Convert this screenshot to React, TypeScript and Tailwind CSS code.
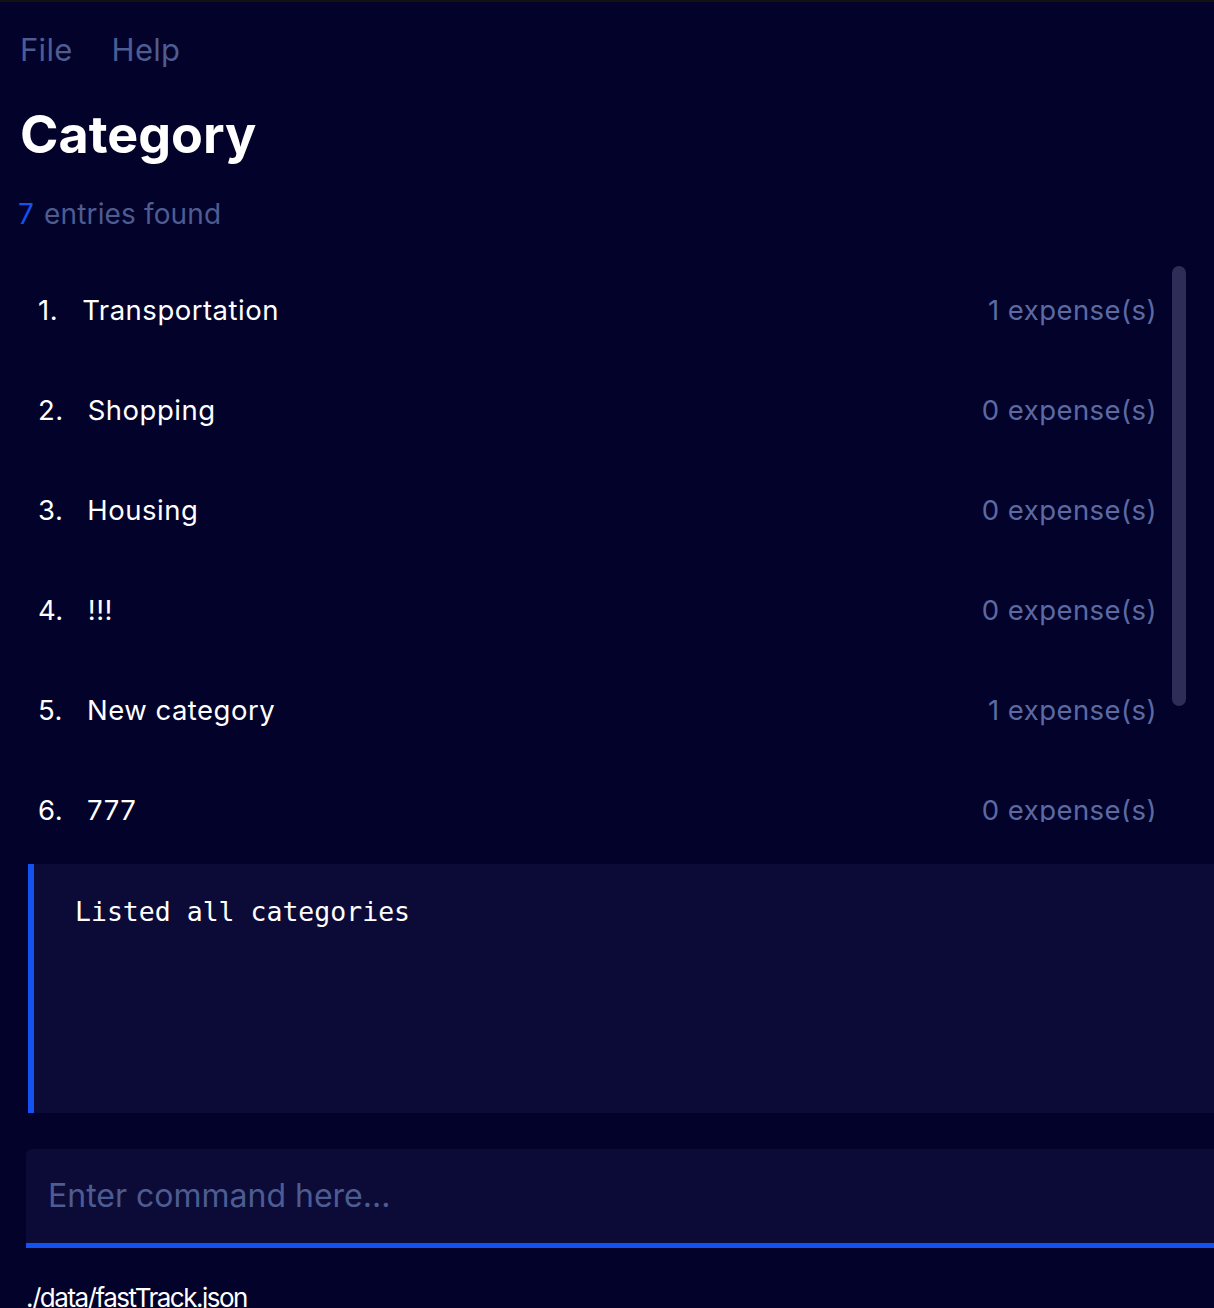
import React from 'react';

const categories = [
  { name: 'Transportation', count: 1 },
  { name: 'Shopping', count: 0 },
  { name: 'Housing', count: 0 },
  { name: '!!!', count: 0 },
  { name: 'New category', count: 1 },
  { name: '777', count: 0 },
  { name: 'Food', count: 0 },
];

const CategoryRow = ({ index, name, count }: { index: number; name: string; count: number }) => (
  <div className="flex h-[100px] shrink-0 items-center justify-between">
    <div className="flex items-center text-[27.5px] tracking-[0.5px] text-white">
      <span className="mr-[24px]">{index}.</span>
      <span>{name}</span>
    </div>
    <span className="text-[27.5px] tracking-[0.45px] text-[#5b6aa3]">{count} expense(s)</span>
  </div>
);

export default function App() {
  return (
    <div className="min-h-screen w-full overflow-hidden border-t-2 border-[#121212] bg-[#03022a] font-['Inter',sans-serif]">
      {/* menu */}
      <div className="flex gap-[39px] px-5 pt-[28px] text-[31px] leading-[40px] tracking-[0.3px] text-[#4d5c91]">
        <span>File</span>
        <span>Help</span>
      </div>

      <h1 className="mt-[35px] px-5 text-[52px] font-bold leading-[60px] text-white">Category</h1>
      <p className="mt-[31px] pl-[18px] text-[28px] leading-[36px] tracking-[0.15px] text-[#4d5c91]">
        <span className="mr-[2px] text-[#1352f0]">7</span> entries found
      </p>

      {/* list */}
      <div className="mt-[29px] flex h-[561px]">
        <div className="flex flex-1 flex-col overflow-hidden pl-[38px] pr-[15px]">
          {categories.map((c, i) => (
            <CategoryRow key={c.name} index={i + 1} name={c.name} count={c.count} />
          ))}
        </div>
        <div className="mr-[28px] w-[14px]">
          <div className="mt-[5px] h-[440px] rounded-full bg-[#2e2d57]" />
        </div>
      </div>

      {/* result */}
      <div className="ml-[28px] mt-[42px] h-[249px] border-l-[6px] border-[#1352f0] bg-[#0c0b38] pl-[41px] pt-[32px]">
        <p className="font-['DejaVu_Sans_Mono',monospace] text-[26.5px] leading-[32px] text-white">
          Listed all categories
        </p>
      </div>

      {/* command box */}
      <div className="ml-[26px] mt-[36px] flex h-[99px] items-center rounded-tl-md border-b-[5px] border-[#1352f0] bg-[#0c0b38] pl-[22px]">
        <span className="text-[32px] text-[#4d5c91]">Enter command here...</span>
      </div>

      <div className="mt-[34px] px-[26px] text-[26px] leading-[32px] tracking-[-1.5px] text-white">
        ./data/fastTrack.json
      </div>
    </div>
  );
}
